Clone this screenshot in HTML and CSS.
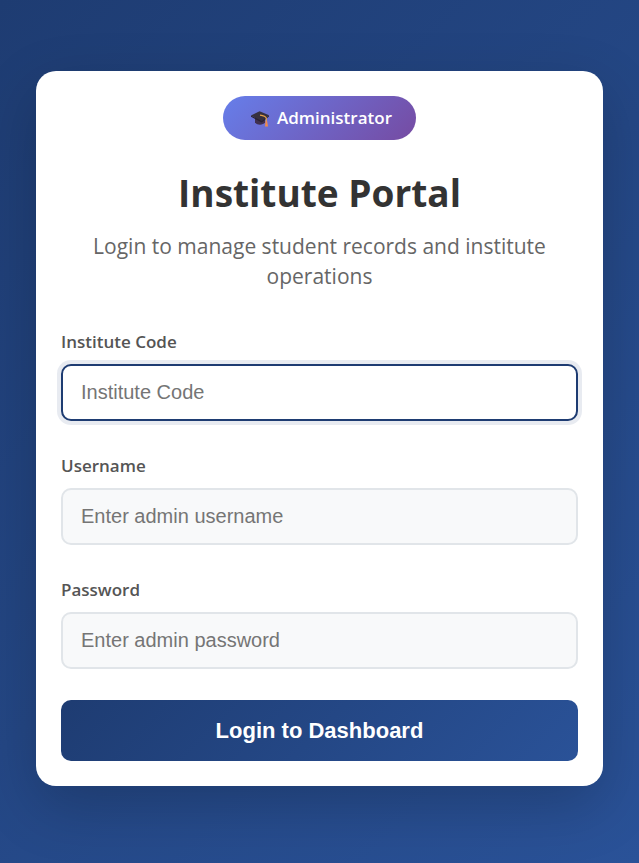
FILE: index.html
```html
<!DOCTYPE html>
<html lang="en">
<head>
  <meta charset="utf-8">
  <meta name="viewport" content="width=device-width, initial-scale=1">
  <title>Institute Portal</title>
  <link rel="stylesheet" href="styles.css">
</head>
<body>
  <main class="card">
    <header class="intro">
      <div class="badge">
        <svg class="badge-icon" viewBox="0 0 20 20" aria-hidden="true">
          <path d="M5 9v5.500c1.200 1.500 3 2.200 5 2.200s4-.8 5-2.200V9z" fill="#40304f"/>
          <path d="M1 7.600 9.500 3.200l9.500 4L11.800 13z" fill="#37303f"/>
          <path d="M1 7.600 11.800 13 19 7.200v1.200L11.800 14.500 1 8.800z" fill="#2a2233"/>
          <path d="M10 7.200c3 .4 5.800 1.400 6.300 3V14" fill="none" stroke="#e5a04b" stroke-width="1.200"/>
          <path d="M15.500 13.200h1.700l.8 5.300h-3z" fill="#f08a4b"/>
        </svg>
        <span>Administrator</span>
      </div>
      <h1 class="title">Institute Portal</h1>
      <p class="subtitle">Login to manage student records and institute operations</p>
    </header>
    <form class="form">
      <div class="field">
        <label for="code">Institute Code</label>
        <input id="code" name="code" type="text" placeholder="Institute Code" class="is-active">
      </div>
      <div class="field">
        <label for="username">Username</label>
        <input id="username" name="username" type="text" placeholder="Enter admin username">
      </div>
      <div class="field">
        <label for="password">Password</label>
        <input id="password" name="password" type="password" placeholder="Enter admin password">
      </div>
      <button class="submit" type="submit">Login to Dashboard</button>
    </form>
  </main>
</body>
</html>
```
FILE: styles.css
```css
* {
  box-sizing: border-box;
  margin: 0;
}

body {
  min-height: 100vh;
  display: flex;
  align-items: center;
  justify-content: center;
  padding: 24px 36px 30px;
  background: linear-gradient(135deg, #1e3c72 0%, #2a5298 100%);
  font-family: "Segoe UI", "Open Sans", "Noto Sans", sans-serif;
}

.card {
  width: 100%;
  max-width: 568px;
  padding: 25px;
  border-radius: 20px;
  background: #fff;
  box-shadow: 0 20px 60px rgba(0, 0, 0, 0.2);
}

.intro {
  margin-bottom: 37px;
  text-align: center;
}

.badge {
  display: inline-flex;
  align-items: center;
  gap: 7px;
  height: 44px;
  padding: 0 24px 0 27px;
  border-radius: 25px;
  background: linear-gradient(135deg, #667eea 0%, #764ba2 100%);
  color: #fff;
  font-size: 17px;
  font-weight: 600;
  line-height: 24px;
  vertical-align: top;
}

.badge-icon {
  width: 20px;
  height: 20px;
}

.title {
  margin: 26px 0 11px;
  color: #333;
  font-size: 37px;
  font-weight: 700;
  line-height: 54px;
}

.subtitle {
  color: #666;
  font-size: 21px;
  line-height: 30px;
}

.form {
  display: grid;
  gap: 31px;
}

.field {
  display: grid;
  gap: 8px;
}

.field label {
  color: #555;
  font-size: 17px;
  font-weight: 600;
  line-height: 28px;
}

.field input {
  width: 100%;
  height: 57px;
  padding: 0 18px;
  border: 2px solid #e1e5e9;
  border-radius: 10px;
  outline: none;
  background: #f8f9fa;
  color: #333;
  font-family: "Liberation Sans", Arial, sans-serif;
  font-size: 20px;
}

.field input::placeholder {
  color: #757575;
}

.field input.is-active,
.field input:focus {
  border-color: #1e3c72;
  background: #fff;
  box-shadow: 0 0 0 4px rgba(30, 60, 114, 0.1);
}

.submit {
  height: 61px;
  border: 0;
  border-radius: 10px;
  background: linear-gradient(135deg, #1e3c72 0%, #2a5298 100%);
  color: #fff;
  font-family: "Liberation Sans", Arial, sans-serif;
  font-size: 22px;
  font-weight: 700;
  cursor: pointer;
}
```
